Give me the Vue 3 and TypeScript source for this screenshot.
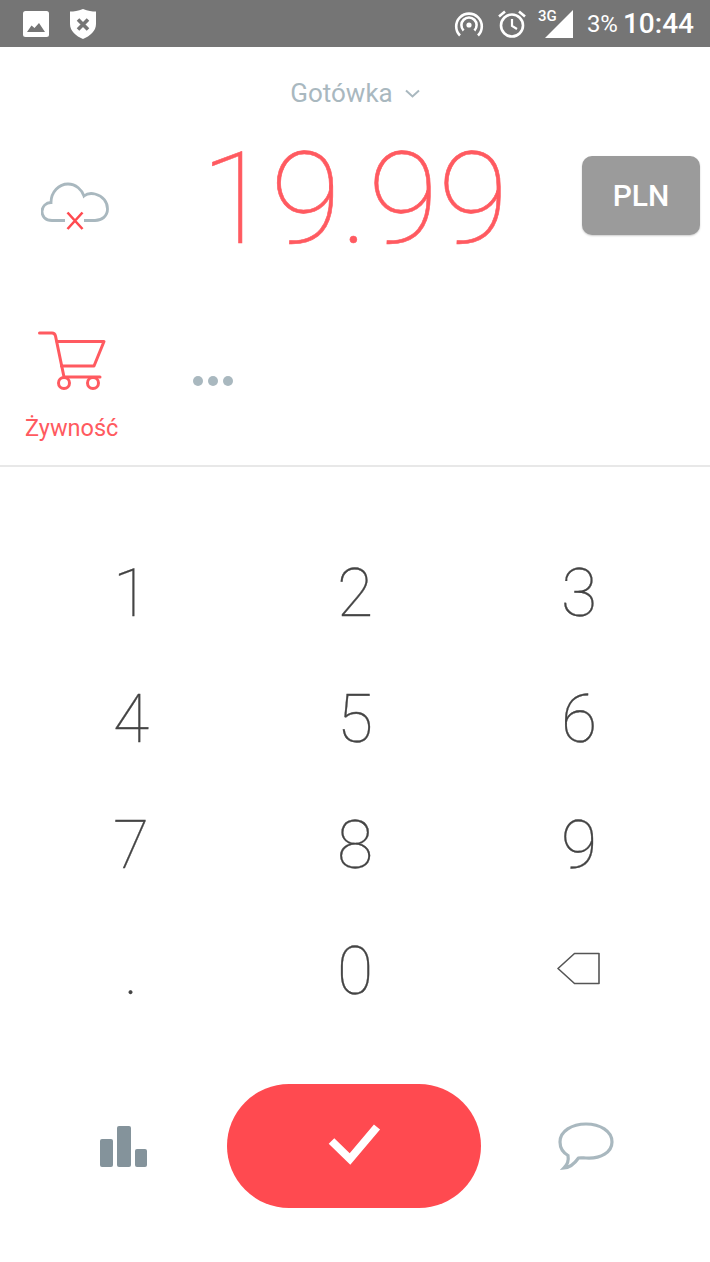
<script setup lang="ts">
const keys: string[] = ['1', '2', '3', '4', '5', '6', '7', '8', '9', '.', '0', 'back'];
</script>

<template>
  <div class="screen">
    <div class="status">
      <svg class="st-photo" width="26" height="26" viewBox="0 0 26 26">
        <rect width="26" height="26" rx="2.5" fill="#fff" />
        <path d="M4 21 L8.500 14.500 L11.500 17 L16 12 L22 21 Z" fill="#757575" />
      </svg>
      <svg class="st-shield" width="26" height="30" viewBox="0 0 26 30">
        <path d="M13 0 C18 2 22 2.6 26 2.6 V15 C26 22 20 27 13 30 C6 27 0 22 0 15 V2.6 C4 2.6 8 2 13 0 Z" fill="#fff" />
        <path d="M8 10.500 L18 20.500 M18 10.500 L8 20.500" stroke="#757575" stroke-width="3.6" fill="none" />
      </svg>
      <div class="st-right">
        <svg class="st-hotspot" width="30" height="28" viewBox="0 0 30 28" fill="none" stroke="#fff" stroke-width="2.6">
          <path d="M6 25.5 A12.8 12.8 0 1 1 24 25.5" />
          <path d="M9.6 20.5 A7.6 7.6 0 1 1 20.4 20.5" />
          <circle cx="15" cy="15" r="2.6" fill="#fff" stroke="none" />
        </svg>
        <svg class="st-alarm" width="30" height="30" viewBox="0 0 30 30" fill="none" stroke="#fff" stroke-width="2.6">
          <circle cx="15" cy="16.5" r="11" />
          <path d="M15 10 V17 L20 20" stroke-width="2.2" />
          <path d="M2 7.5 L8 2.5 M28 7.5 L22 2.5" />
        </svg>
        <div class="st-signal">
          <span class="st-3g">3G</span>
          <svg width="28" height="28" viewBox="0 0 28 28">
            <path d="M28 0 V28 H0 Z" fill="#fff" />
          </svg>
        </div>
        <span class="st-battery">3%</span>
        <span class="st-time">10:44</span>
      </div>
    </div>

    <div class="account">
      <span>Gotówka</span>
      <svg width="15" height="9" viewBox="0 0 15 9" fill="none" stroke="#a9b8bf" stroke-width="2">
        <path d="M1 1.5 L7.500 7.500 L14 1.5" />
      </svg>
    </div>

    <div class="amount-row">
      <svg class="cloud" width="68" height="50" viewBox="0 0 68 50" fill="none">
        <path
          d="M24 38.500 H11 C4 38.500 1 34 1 29.500 C1 24.500 5 20.500 10 20.500 C10 10 18 2 27 2 C35 2 41 8 43 14 C46 11.500 50 11 54 12 C62 14 66.500 20 66.500 27 C66.500 34 61 38.500 54 38.500 H43"
          stroke="#a9b8bf"
          stroke-width="2.8"
        />
        <path d="M26.500 30.500 L41.500 47 M41.500 30.500 L26.500 47" stroke="#ff4a50" stroke-width="2.600" />
      </svg>
      <div class="amount">19.99</div>
      <button class="currency">PLN</button>
    </div>

    <div class="category-row">
      <div class="category">
        <svg class="cart" width="68" height="60" viewBox="0 0 68 60" fill="none" stroke="#ff5a60" stroke-width="3" stroke-linejoin="round" stroke-linecap="round">
          <path d="M1.500 2 H14 C16 2 17 3 17.500 5 L26 46 H62" />
          <path d="M19 10.500 H66 L56 35 H23.500" />
          <circle cx="26" cy="52" r="5.500" />
          <circle cx="55" cy="52" r="5.500" />
        </svg>
        <span>Żywność</span>
      </div>
      <div class="dots"><i /><i /><i /></div>
    </div>

    <div class="keypad">
      <div v-for="k in keys" :key="k" class="key">
        <svg v-if="k === 'back'" class="back" width="44" height="34" viewBox="0 0 44 34" fill="none" stroke="#555" stroke-width="1.600" stroke-linejoin="round">
          <path d="M1 16.500 L17.500 1.500 H42 V31.500 H17.500 Z" />
        </svg>
        <template v-else>{{ k }}</template>
      </div>
    </div>

    <div class="bottom">
      <svg class="chart" width="47" height="41" viewBox="0 0 47 41" fill="#84939b">
        <rect x="0" y="13" width="13" height="28" rx="2" />
        <rect x="17" y="0" width="14" height="41" rx="2" />
        <rect x="35" y="23" width="12" height="18" rx="2" />
      </svg>
      <button class="confirm">
        <svg width="54" height="44" viewBox="0 0 54 44" fill="none" stroke="#fff" stroke-width="8">
          <path d="M4.500 17 L23 35 L50 3" />
        </svg>
      </button>
      <svg class="bubble" width="56" height="48" viewBox="0 0 56 48" fill="none" stroke="#a9b8bf" stroke-width="3.200">
        <path d="M28 2 C42 2 54 9 54 20 C54 30 43 37 28 36 C26 36 22 35.500 20.500 36 C17 41 12 45.500 6 46 C9 43 11 39 10 33.500 C5 30.500 2 26 2 20 C2 9 14 2 28 2 Z" />
      </svg>
    </div>
  </div>
</template>

<style scoped>
.screen {
  width: 710px;
  height: 1262px;
  background: #fff;
  font-family: Roboto, sans-serif;
  overflow: hidden;
}

.status {
  height: 47px;
  display: flex;
  align-items: center;
  background: #757575;
  color: #fff;
  padding: 0 16px 0 23px;
}
.st-photo {
  margin-right: 21px;
}
.st-right {
  margin-left: auto;
  display: flex;
  align-items: center;
}
.st-hotspot {
  margin-right: 13px;
}
.st-alarm {
  margin-right: 11px;
}
.st-signal {
  position: relative;
  width: 35px;
  height: 28px;
  display: flex;
  justify-content: flex-end;
  margin-right: 14px;
}
.st-3g {
  position: absolute;
  left: 0;
  top: -3px;
  font-size: 15px;
  font-weight: 500;
}
.st-battery {
  font-size: 24px;
  margin-right: 5px;
}
.st-time {
  font-size: 28px;
  font-weight: 500;
}

.account {
  margin-top: 30px;
  height: 32px;
  display: flex;
  align-items: center;
  justify-content: center;
  gap: 12px;
  font-size: 26px;
  color: #a9b8bf;
}

.amount-row {
  display: grid;
  grid-template-columns: 150px 1fr 128px;
  align-items: center;
  height: 140px;
  margin: 12px 0 43px;
}
.cloud {
  margin: 24px 0 0 41px;
}
.amount {
  font-size: 128px;
  font-weight: 100;
  color: #ff5a60;
  -webkit-text-stroke: 0.6px #ff5a60;
  text-align: center;
  line-height: 140px;
  margin: 8px 0 0 -23px;
}
.currency {
  width: 118px;
  height: 79px;
  border: 0;
  border-radius: 10px;
  background: #9b9b9b;
  color: #fff;
  font-family: Roboto, sans-serif;
  font-size: 30px;
  font-weight: 500;
  box-shadow: 0 1px 2px rgba(0, 0, 0, 0.2);
}

.category-row {
  height: 163px;
  border-bottom: 2px solid #e8e8e8;
  display: flex;
  align-items: flex-start;
  padding: 27px 0 0 25px;
  box-sizing: border-box;
}
.category {
  display: flex;
  flex-direction: column;
  align-items: flex-start;
  color: #ff5a60;
  font-size: 23.5px;
  line-height: 30px;
}
.cart {
  margin-left: 13px;
  margin-bottom: 22px;
}
.dots {
  display: flex;
  gap: 5px;
  margin: 45px 0 0 75px;
}
.dots i {
  width: 10px;
  height: 10px;
  border-radius: 50%;
  background: #a9b8bf;
}

.keypad {
  display: grid;
  grid-template-columns: repeat(3, 224px);
  grid-auto-rows: 126px;
  padding: 63px 0 0 19px;
}
.key {
  display: flex;
  align-items: center;
  justify-content: center;
  font-size: 66px;
  font-weight: 100;
  color: #444;
  -webkit-text-stroke: 0.3px #444;
}
.back {
  margin-bottom: 4px;
}

.bottom {
  display: flex;
  align-items: center;
  height: 124px;
  margin-top: 50px;
  padding-left: 100px;
}
.confirm {
  width: 254px;
  height: 124px;
  margin-left: 80px;
  border: 0;
  border-radius: 62px;
  background: #ff4a50;
  display: flex;
  align-items: center;
  justify-content: center;
  padding: 0;
}
.bubble {
  margin-left: 77px;
}
</style>
